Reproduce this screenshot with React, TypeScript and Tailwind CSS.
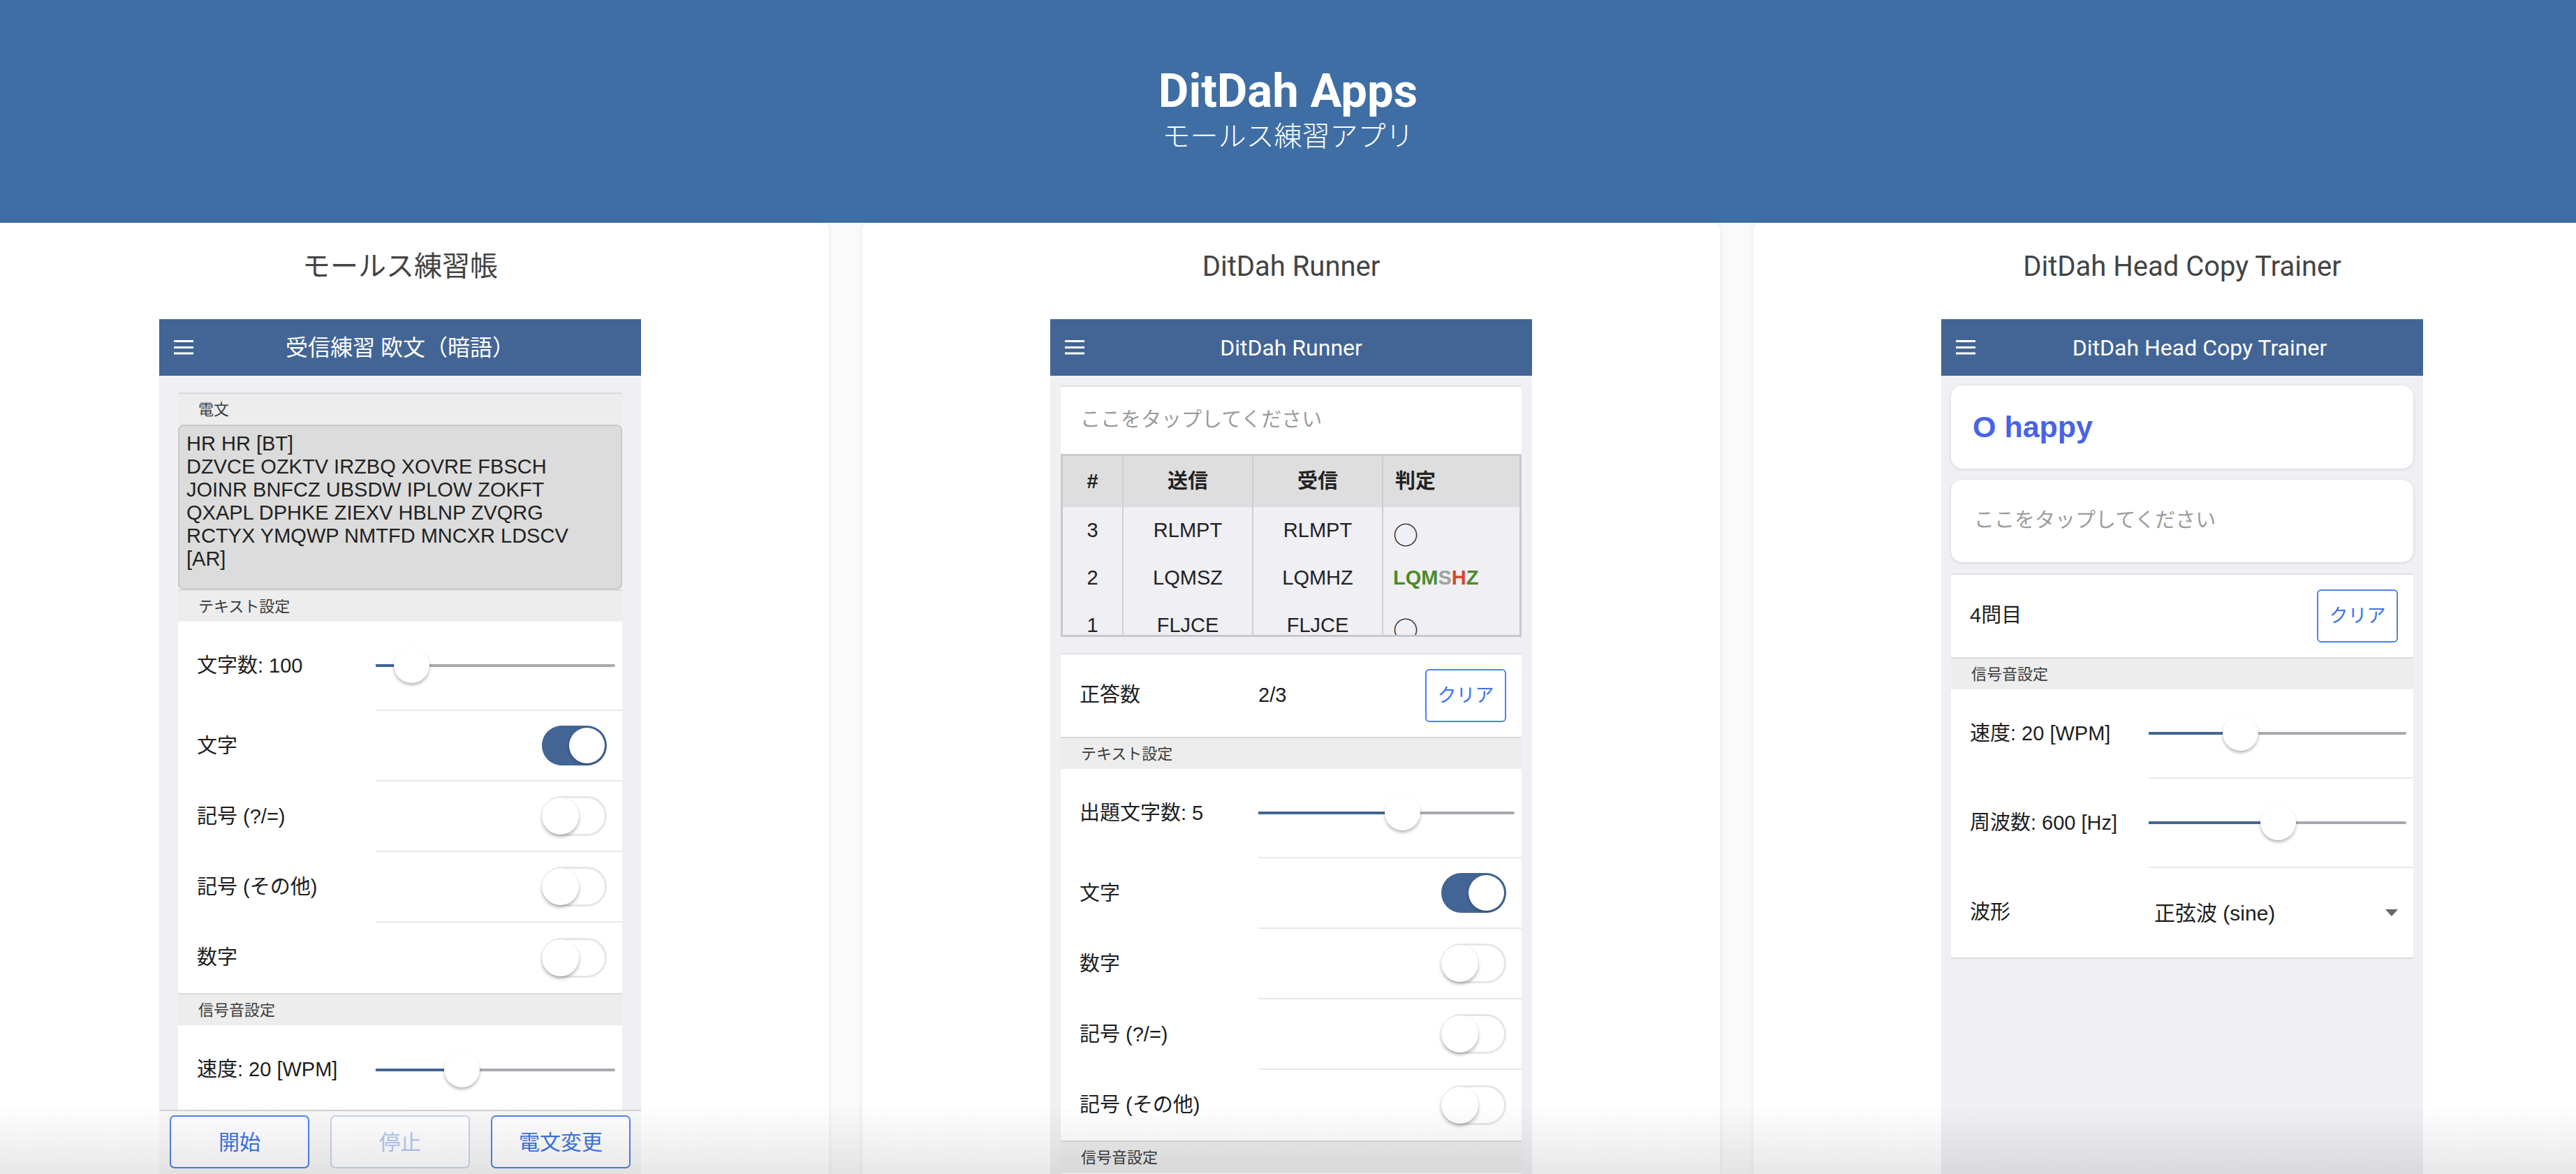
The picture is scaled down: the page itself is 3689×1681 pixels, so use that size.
import React from 'react';
import clsx from 'clsx';

const MenuIcon = () => (
    <svg width="28" height="21" viewBox="0 0 28 21" className="shrink-0">
        <rect x="0" y="0" width="28" height="3" fill="#fff" />
        <rect x="0" y="9" width="28" height="3" fill="#fff" />
        <rect x="0" y="17.5" width="28" height="3" fill="#fff" />
    </svg>
);

const PhoneHeader = ({ title, shift = false }: { title: string; shift?: boolean }) => (
    <div className="h-[81px] shrink-0 bg-[#426595] flex items-center text-white">
        <div className="w-[120px] shrink-0 pl-[21px] flex items-center">
            <MenuIcon />
        </div>
        <div className="flex-1 text-center text-[32px] font-['Roboto','Noto_Sans_CJK_JP',sans-serif] whitespace-nowrap">
            {title}
        </div>
        <div className={clsx('shrink-0', shift ? 'w-[70px]' : 'w-[120px]')} />
    </div>
);

const SectionHeader = ({ label }: { label: string }) => (
    <div className="h-[46px] shrink-0 bg-[#ededed] border-t-2 border-[#d9d9d9] pl-[29px] flex items-center text-[22px] text-[#3a3a3a]">
        {label}
    </div>
);

interface RowProps {
    label: React.ReactNode;
    height: 'slider' | 'toggle' | 'stat';
    last?: boolean;
    children?: React.ReactNode;
}

const Row = ({ label, height, last = false, children }: RowProps) => (
    <div
        className={clsx(
            'flex shrink-0 bg-white',
            height === 'slider' && 'h-[128px]',
            height === 'toggle' && 'h-[101px]',
            height === 'stat' && 'h-[118px]'
        )}
    >
        <div className="w-[283px] shrink-0 pl-[27px] flex items-center text-[29px] text-[#1d1d1d] whitespace-nowrap">
            {label}
        </div>
        <div className={clsx('flex-1 flex items-center', !last && 'border-b-2 border-[#e8e8e8]')}>
            {children}
        </div>
    </div>
);

const Slider = ({ pct }: { pct: number }) => (
    <div className="relative flex-1 mr-[10px] h-[56px] flex items-center">
        <div className="h-[4px] w-full rounded-full bg-[#a7aaae]" />
        <div className="absolute left-0 h-[4px] bg-[#426595]" style={{ width: `${pct}%` }} />
        <div
            className="absolute top-[2px] w-[51px] h-[51px] rounded-full bg-white shadow-[0_3px_4px_rgba(0,0,0,0.28)]"
            style={{ left: `calc(${pct}% - 25px)` }}
        />
    </div>
);

const Toggle = ({ on = false }: { on?: boolean }) =>
    on ? (
        <div className="ml-auto mr-[22px] relative w-[93px] h-[57px] rounded-full bg-[#426595]">
            <div className="absolute right-[3px] top-[3px] w-[51px] h-[51px] rounded-full bg-white shadow-[0_2px_4px_rgba(0,0,0,0.25)]" />
        </div>
    ) : (
        <div className="ml-auto mr-[22px] relative w-[93px] h-[57px] rounded-full bg-white border-[3px] border-[#e6e6e6]">
            <div className="absolute left-[-3px] top-[-1px] w-[53px] h-[53px] rounded-full bg-white shadow-[0_3px_5px_rgba(0,0,0,0.3)]" />
        </div>
    );

const ClearButton = () => (
    <button className="ml-auto mr-[22px] w-[116px] h-[76px] rounded-[6px] border-2 border-[#4d84ea] bg-white text-[27px] text-[#3d74e6]">
        クリア
    </button>
);

const TapArea = ({ rounded = false }: { rounded?: boolean }) => (
    <div
        className={clsx(
            'shrink-0 bg-white flex items-center text-[29px] text-[#9c9c9c]',
            rounded
                ? 'h-[118px] rounded-[16px] pl-[33px] shadow-[0_1px_4px_rgba(0,0,0,0.12)]'
                : 'h-[98px] pl-[28px] border-t-2 border-[#e2e2e2]'
        )}
    >
        ここをタップしてください
    </div>
);

const rows = [
    { n: 3, sent: 'RLMPT', recv: 'RLMPT' },
    { n: 2, sent: 'LQMSZ', recv: 'LQMHZ' },
    { n: 1, sent: 'FLJCE', recv: 'FLJCE' },
];

const ResultTable = () => (
    <div className="h-[262px] shrink-0 border-[3px] border-[#c9c9c9] overflow-hidden bg-[#efeff4] text-[29px] text-[#222]">
        <div className="grid grid-cols-[87px_186px_186px_1fr] h-[73px] bg-[#dedede] font-bold">
            <div className="flex items-center justify-center border-r-2 border-[#cfcfcf]">#</div>
            <div className="flex items-center justify-center border-r-2 border-[#cfcfcf]">送信</div>
            <div className="flex items-center justify-center border-r-2 border-[#cfcfcf]">受信</div>
            <div className="flex items-center pl-[17px]">判定</div>
        </div>
        {rows.map((r) => (
            <div key={r.n} className="grid grid-cols-[87px_186px_186px_1fr] h-[68px]">
                <div className="flex items-center justify-center border-r-2 border-[#cfcfcf]">{r.n}</div>
                <div className="flex items-center justify-center border-r-2 border-[#cfcfcf]">{r.sent}</div>
                <div className="flex items-center justify-center border-r-2 border-[#cfcfcf]">{r.recv}</div>
                <div className="flex items-center pl-[14px]">
                    {r.sent === r.recv ? (
                        <span className="text-[36px] leading-none mt-[8px] font-['Noto_Sans_CJK_JP',sans-serif]">○</span>
                    ) : (
                        <span className="font-bold">
                            <span className="text-[#4d8a2a]">LQM</span>
                            <span className="text-[#a0a0a0]">S</span>
                            <span className="text-[#d9452b]">H</span>
                            <span className="text-[#4d8a2a]">Z</span>
                        </span>
                    )}
                </div>
            </div>
        ))}
    </div>
);

const morseText = [
    'HR HR [BT]',
    'DZVCE OZKTV IRZBQ XOVRE FBSCH',
    'JOINR BNFCZ UBSDW IPLOW ZOKFT',
    'QXAPL DPHKE ZIEXV HBLNP ZVQRG',
    'RCTYX YMQWP NMTFD MNCXR LDSCV',
    '[AR]',
];

const PracticePhone = () => (
    <>
        <PhoneHeader title="受信練習 欧文（暗語）" />
        <div className="flex-1 min-h-0 overflow-hidden pt-[24px] px-[27px] flex flex-col">
            <SectionHeader label="電文" />
            <div className="h-[236px] shrink-0 rounded-[8px] border-2 border-[#c9c9c9] bg-[#dcdcdc] px-[10px] pt-[9px] text-[29px] leading-[33px] text-[#222]">
                {morseText.map((line) => (
                    <div key={line}>{line}</div>
                ))}
            </div>
            <SectionHeader label="テキスト設定" />
            <Row label="文字数: 100" height="slider">
                <Slider pct={15} />
            </Row>
            <Row label="文字" height="toggle">
                <Toggle on />
            </Row>
            <Row label="記号 (?/=)" height="toggle">
                <Toggle />
            </Row>
            <Row label="記号 (その他)" height="toggle">
                <Toggle />
            </Row>
            <Row label="数字" height="toggle" last>
                <Toggle />
            </Row>
            <SectionHeader label="信号音設定" />
            <Row label="速度: 20 [WPM]" height="slider" last>
                <Slider pct={36} />
            </Row>
        </div>
        <div className="h-[92px] shrink-0 bg-[#f8f8f8] border-t-2 border-[#d2d2d2] flex justify-center gap-[30px] pt-[6px]">
            <button className="w-[200px] h-[76px] rounded-[7px] border-2 border-[#4d84ea] bg-white text-[30px] text-[#3d74e6]">
                開始
            </button>
            <button className="w-[200px] h-[76px] rounded-[7px] border-2 border-[#c7d5f3] bg-white text-[30px] text-[#b3c6f1]">
                停止
            </button>
            <button className="w-[200px] h-[76px] rounded-[7px] border-2 border-[#4d84ea] bg-white text-[30px] text-[#3d74e6]">
                電文変更
            </button>
        </div>
    </>
);

const RunnerPhone = () => (
    <>
        <PhoneHeader title="DitDah Runner" />
        <div className="flex-1 min-h-0 overflow-hidden pt-[14px] px-[15px] flex flex-col">
            <TapArea />
            <ResultTable />
            <div className="h-[23px] shrink-0" />
            <div className="border-t-2 border-[#e2e2e2]">
                <Row label="正答数" height="stat" last>
                    <span className="text-[29px] text-[#1d1d1d]">2/3</span>
                    <ClearButton />
                </Row>
            </div>
            <SectionHeader label="テキスト設定" />
            <Row label="出題文字数: 5" height="slider">
                <Slider pct={56} />
            </Row>
            <Row label="文字" height="toggle">
                <Toggle on />
            </Row>
            <Row label="数字" height="toggle">
                <Toggle />
            </Row>
            <Row label="記号 (?/=)" height="toggle">
                <Toggle />
            </Row>
            <Row label="記号 (その他)" height="toggle" last>
                <Toggle />
            </Row>
            <SectionHeader label="信号音設定" />
            <div className="h-[120px] shrink-0 bg-white" />
        </div>
    </>
);

const HeadCopyPhone = () => (
    <>
        <PhoneHeader title="DitDah Head Copy Trainer" shift />
        <div className="flex-1 min-h-0 overflow-hidden pt-[14px] px-[14px] flex flex-col">
            <div className="h-[119px] shrink-0 rounded-[16px] bg-white shadow-[0_1px_4px_rgba(0,0,0,0.12)] pl-[31px] flex items-center text-[43px] font-bold text-[#4763e8]">
                O happy
            </div>
            <div className="h-[16px] shrink-0" />
            <TapArea rounded />
            <div className="h-[16px] shrink-0" />
            <div className="border-t-2 border-[#e2e2e2]">
                <Row label="4問目" height="stat" last>
                    <ClearButton />
                </Row>
            </div>
            <SectionHeader label="信号音設定" />
            <Row label="速度: 20 [WPM]" height="slider">
                <Slider pct={35.5} />
            </Row>
            <Row label="周波数: 600 [Hz]" height="slider">
                <Slider pct={50} />
            </Row>
            <div className="border-b-2 border-[#dadada]">
                <Row label="波形" height="slider" last>
                    <div className="flex-1 flex items-center pl-[8px] pr-[22px]">
                        <span className="text-[30px] text-[#1d1d1d]">正弦波 (sine)</span>
                        <svg width="18" height="10" viewBox="0 0 18 10" className="ml-auto">
                            <path d="M0 0 L18 0 L9 10 Z" fill="#666" />
                        </svg>
                    </div>
                </Row>
            </div>
        </div>
    </>
);

const AppCard = ({ title, children }: { title: string; children: React.ReactNode }) => (
    <div className="w-[1228px] shrink-0 bg-white rounded-t-[10px] shadow-[0_0_10px_rgba(0,0,0,0.07)] flex flex-col items-center pt-[33px]">
        <h2 className="text-[40px] leading-[60px] text-[#444] font-['Roboto','Noto_Sans_CJK_JP',sans-serif]">
            {title}
        </h2>
        <div className="mt-[45px] w-[690px] flex-1 min-h-0 bg-[#efeff4] flex flex-col overflow-hidden">
            {children}
        </div>
    </div>
);

export default function App() {
    return (
        <div className="relative w-[3689px] h-[1681px] overflow-hidden bg-[#fafafa] font-['Liberation_Sans','Noto_Sans_CJK_JP',sans-serif]">
            <header className="h-[319px] bg-[#3f6ea5] flex flex-col items-center pt-[92px] text-white font-['Roboto','Noto_Sans_CJK_JP',sans-serif]">
                <h1 className="text-[67px] leading-[76px] font-bold">DitDah Apps</h1>
                <p className="text-[40px] leading-[52px] font-light mt-[2px]">モールス練習アプリ</p>
            </header>
            <main className="flex gap-[48px] ml-[-41px] h-[1362px]">
                <AppCard title="モールス練習帳">
                    <PracticePhone />
                </AppCard>
                <AppCard title="DitDah Runner">
                    <RunnerPhone />
                </AppCard>
                <AppCard title="DitDah Head Copy Trainer">
                    <HeadCopyPhone />
                </AppCard>
            </main>
            <div className="pointer-events-none absolute left-0 right-0 bottom-0 h-[100px] bg-[linear-gradient(to_bottom,rgba(0,0,0,0),rgba(0,0,0,0.09))]" />
        </div>
    );
}
